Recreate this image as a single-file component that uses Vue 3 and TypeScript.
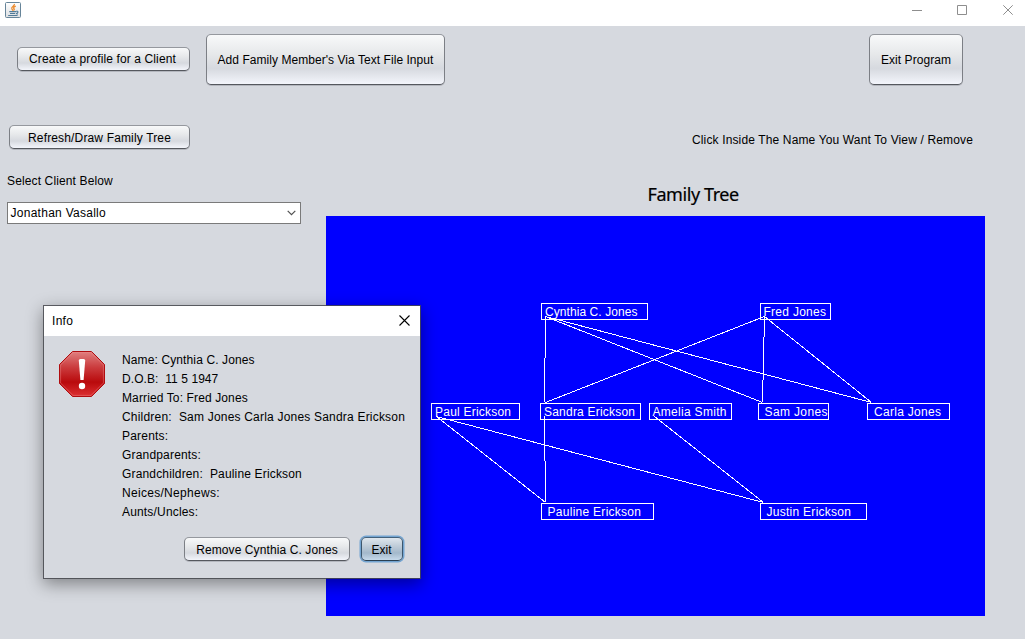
<script setup lang="ts">
interface TreeNode {
  name: string
  x: number
  y: number
  w: number
  tx: number
  tw: number
}

interface Detail {
  text: string
  spacing: number
}

const people: TreeNode[] = [
  { name: 'Cynthia C. Jones', x: 215, y: 87, w: 106, tx: 219, tw: 92.5 },
  { name: 'Fred Jones', x: 434, y: 87, w: 70, tx: 437.5, tw: 62.5 },
  { name: 'Paul Erickson', x: 105, y: 187, w: 88, tx: 109, tw: 76 },
  { name: 'Sandra Erickson', x: 214, y: 187, w: 100, tx: 218, tw: 91 },
  { name: 'Amelia Smith', x: 323, y: 187, w: 82, tx: 326.5, tw: 74 },
  { name: 'Sam Jones', x: 432, y: 187, w: 70, tx: 438.5, tw: 63 },
  { name: 'Carla Jones', x: 541, y: 187, w: 82, tx: 548, tw: 67 },
  { name: 'Pauline Erickson', x: 215, y: 287, w: 112, tx: 221.5, tw: 93.5 },
  { name: 'Justin Erickson', x: 434, y: 287, w: 106, tx: 440.5, tw: 84.5 },
]

const links: number[][] = [
  [219, 101, 218, 187],
  [219, 101, 436, 187],
  [219, 101, 545, 187],
  [438, 101, 219, 187],
  [438, 101, 436, 187],
  [438, 101, 545, 187],
  [218, 201, 219, 287],
  [110, 201, 219, 287],
  [110, 201, 437, 287],
  [328, 201, 437, 287],
]

const details: Detail[] = [
  { text: 'Name: Cynthia C. Jones', spacing: 0.12 },
  { text: 'D.O.B:  11 5 1947', spacing: 0.07 },
  { text: 'Married To: Fred Jones', spacing: 0.12 },
  { text: 'Children:  Sam Jones Carla Jones Sandra Erickson', spacing: 0.2 },
  { text: 'Parents:', spacing: 0.2 },
  { text: 'Grandparents:', spacing: 0.18 },
  { text: 'Grandchildren:  Pauline Erickson', spacing: 0.16 },
  { text: 'Neices/Nephews:', spacing: 0.3 },
  { text: 'Aunts/Uncles:', spacing: 0.17 },
]
</script>

<template>
  <div class="window">
    <header class="titlebar">
      <svg class="java" width="16" height="16" viewBox="0 0 16 16">
        <defs>
          <linearGradient id="jbg" x1="0" y1="0" x2="0" y2="1">
            <stop offset="0" stop-color="#ffffff" />
            <stop offset="1" stop-color="#dcdfe2" />
          </linearGradient>
        </defs>
        <rect x="0.5" y="0.5" width="15" height="15" rx="1" fill="url(#jbg)" stroke="#668499" />
        <path d="M9.4 2 C10 4 5.6 4.6 6.9 7 L8 8.6 M10.8 4.2 C8.4 5 8.1 6 9.3 7.2 L8.5 8.6" fill="none" stroke="#ec8a2c" stroke-width="1.3" />
        <path d="M4.3 9.6 H11 M11 9.3 C13.7 8.6 13.5 11.4 10.8 11.6 M5 11.5 H10 M3.2 13.5 H11.5 L12.8 12.8" fill="none" stroke="#527b98" stroke-width="1.1" />
      </svg>
      <svg class="controls" width="102" height="11" viewBox="0 0 102 11" fill="none" stroke="#8e8e8e">
        <path d="M0 5.5 H10 M45.5 0.5 H54.5 V9.5 H45.5 Z" />
        <path d="M91.3 0.3 L100.7 9.7 M100.7 0.3 L91.3 9.7" />
      </svg>
    </header>

    <div class="toolbar">
      <button class="btn create">Create a profile for a Client</button>
      <button class="btn add">Add Family Member's Via Text File Input</button>
      <button class="btn leave">Exit Program</button>
    </div>

    <main class="content">
      <section class="side">
        <button class="btn refresh">Refresh/Draw Family Tree</button>
        <div class="label">Select Client Below</div>
        <div class="combo">
          <span>Jonathan Vasallo</span>
          <svg width="9" height="6" viewBox="0 0 9 6"><path d="M0.7 0.8 L4.5 4.6 L8.3 0.8" fill="none" stroke="#505050" stroke-width="1.2" /></svg>
        </div>
      </section>
      <section class="tree">
        <div class="hint">Click Inside The Name You Want To View / Remove</div>
        <h1 class="heading">Family Tree</h1>
        <svg class="canvas" width="659" height="400" viewBox="0 0 659 400">
          <g fill="none" stroke="#fff" stroke-width="1" shape-rendering="crispEdges">
            <rect v-for="p in people" :key="p.name" :x="p.x + 0.5" :y="p.y + 0.5" :width="p.w" height="16" />
            <line v-for="(l, i) in links" :key="i" :x1="l[0] + 0.5" :y1="l[1] - 0.5" :x2="l[2] + 0.5" :y2="l[3] - 0.5" />
          </g>
          <text v-for="p in people" :key="p.name" :x="p.tx" :y="p.y + 13" :textLength="p.tw">{{ p.name }}</text>
        </svg>
      </section>
    </main>

    <div class="dialog">
      <div class="dialog-title">
        <span>Info</span>
        <svg width="11" height="11" viewBox="0 0 11 11"><path d="M0.5 0.5 L10.5 10.5 M10.5 0.5 L0.5 10.5" stroke="#000" stroke-width="1.1" /></svg>
      </div>
      <div class="dialog-body">
        <svg class="stop" width="46" height="46" viewBox="0 0 46 46">
          <defs>
            <linearGradient id="red" x1="0" y1="0" x2="0" y2="1">
              <stop offset="0" stop-color="#e08080" />
              <stop offset="0.35" stop-color="#cb3c3e" />
              <stop offset="0.68" stop-color="#b90a0c" />
              <stop offset="1" stop-color="#dc3032" />
            </linearGradient>
          </defs>
          <path d="M13.5 0.5 H32.5 L45.5 13.5 V32.5 L32.5 45.5 H13.5 L0.5 32.5 V13.5 Z" fill="url(#red)" stroke="#b00c0f" />
          <path d="M14 1.6 H32 L44.4 14 V32 L32 44.4 H14 L1.6 32 V14 Z" fill="none" stroke="#f09090" stroke-opacity="0.4" />
          <path d="M19.8 9.5 Q19.8 8 21.3 8 H24.7 Q26.2 8 26.2 9.5 L24.6 29 H21.4 Z" fill="#fff" />
          <circle cx="23" cy="35" r="3.2" fill="#fff" />
        </svg>
        <div class="details">
          <div v-for="d in details" :key="d.text" class="line" :style="{ letterSpacing: d.spacing + 'px' }">{{ d.text }}</div>
        </div>
      </div>
      <div class="actions">
        <button class="btn remove">Remove Cynthia C. Jones</button>
        <button class="btn focused">Exit</button>
      </div>
    </div>
  </div>
</template>

<style>
html,
body {
  margin: 0;
  overflow: hidden;
}
</style>

<style scoped>
.window {
  position: relative;
  width: 1025px;
  height: 639px;
  overflow: hidden;
  background: #d6d9df;
  color: #000;
  font-family: 'Liberation Sans', Arial, sans-serif;
  font-size: 12px;
}
.titlebar {
  display: flex;
  justify-content: space-between;
  align-items: flex-start;
  height: 26px;
  padding: 2px 11px 0 5px;
  box-sizing: border-box;
  background: #fff;
}
.controls {
  margin-top: 3px;
}
.toolbar {
  display: flex;
  align-items: center;
  height: 51px;
  padding: 8px 62px 0 17px;
}
.btn {
  display: block;
  box-sizing: border-box;
  height: 24px;
  margin: 0;
  padding: 0;
  border: 1px solid;
  border-color: #95989e #7c7f85 #55585e;
  border-radius: 5px;
  background: linear-gradient(#f8f9fa, #e6e8ea 40%, #d6d9df 68%, #f3f5fb);
  box-shadow: 0 1px 0 rgba(80, 84, 92, 0.25);
  color: #000;
  font: inherit;
  white-space: nowrap;
}
.create {
  width: 173px;
  margin-bottom: 2px;
  padding: 1px 2px 0 0;
  letter-spacing: 0.12px;
}
.add {
  width: 239px;
  height: 51px;
  margin-left: 16px;
  letter-spacing: 0.05px;
}
.leave {
  width: 94px;
  height: 51px;
  margin-left: auto;
  letter-spacing: 0.05px;
}
.content {
  display: flex;
  padding-top: 40px;
}
.side {
  width: 326px;
}
.refresh {
  width: 181px;
  margin-left: 9px;
  padding-top: 1px;
  letter-spacing: 0.15px;
}
.label {
  margin: 25px 0 0 7px;
  line-height: 14px;
  letter-spacing: 0.13px;
}
.combo {
  display: flex;
  align-items: center;
  justify-content: space-between;
  box-sizing: border-box;
  width: 294px;
  height: 22px;
  margin: 14px 0 0 7px;
  padding: 0 4px 0 2.5px;
  border: 1px solid #7a7a7a;
  background: #fff;
  letter-spacing: 0.27px;
}
.tree {
  width: 659px;
}
.hint {
  padding: 8px 0 0 366px;
  line-height: 14px;
  white-space: nowrap;
  letter-spacing: 0.14px;
}
.heading {
  margin: 35px 0 0 321.5px;
  height: 34px;
  font: 400 18px/24px 'Noto Sans', sans-serif;
  letter-spacing: -0.42px;
  -webkit-text-stroke: 0.2px #000;
}
.canvas {
  display: block;
  background: #00f;
}
.canvas text {
  fill: #fff;
  font-size: 12px;
}
.dialog {
  position: absolute;
  left: 43px;
  top: 305px;
  width: 378px;
  height: 274px;
  box-sizing: border-box;
  border: 1px solid rgba(70, 72, 78, 0.85);
  background: #d6d9df;
  background-clip: padding-box;
  box-shadow: 0 5px 16px rgba(0, 0, 0, 0.4);
}
.dialog-title {
  display: flex;
  align-items: center;
  justify-content: space-between;
  height: 30px;
  padding: 0 10px 2px 8px;
  box-sizing: border-box;
  background: #fff;
}
.dialog-title span {
  padding-top: 2px;
  letter-spacing: 0.3px;
}
.dialog-body {
  display: flex;
  padding: 15px 0 0 15px;
}
.details {
  margin-left: 17px;
}
.line {
  height: 19px;
  line-height: 19px;
  white-space: pre;
}
.actions {
  display: flex;
  justify-content: flex-end;
  gap: 11px;
  margin-top: 15px;
  padding-right: 17px;
}
.remove {
  width: 166px;
  padding-top: 1px;
  letter-spacing: 0.1px;
}
.focused {
  width: 42px;
  padding: 1px 1px 0 0;
  border-color: #43617c #3c566d #2a3f52;
  background: linear-gradient(#dfe6ed, #bccad7 40%, #a3b8cb 68%, #c6d9ea);
  box-shadow: 0 0 0 1.5px #73a4d1;
}
</style>
